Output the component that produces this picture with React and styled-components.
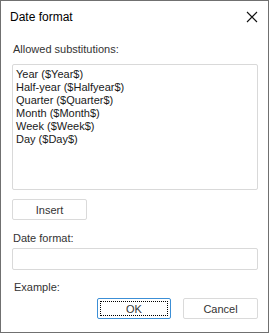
import React from 'react'
import styled, { createGlobalStyle } from 'styled-components'

const GlobalStyle = createGlobalStyle`
  html, body {
    margin: 0;
    padding: 0;
    background: #ffffff;
  }
  * {
    box-sizing: border-box;
  }
`

const Dialog = styled.div`
  width: 269px;
  height: 333px;
  border: 1px solid #707070;
  background: #ffffff;
  font-family: 'Liberation Sans', Arial, sans-serif;
  font-size: 11px;
  color: #1e1e1e;
  display: flex;
  flex-direction: column;
`

const TitleBar = styled.div`
  height: 31px;
  display: flex;
  align-items: center;
  padding: 0 9px;
`

const Title = styled.div`
  flex: 1;
  font-size: 12px;
  color: #000000;
`

const CloseButton = styled.button`
  border: 0;
  background: none;
  padding: 0;
  width: 12px;
  height: 12px;
  margin-right: 1px;
  display: flex;
  svg {
    display: block;
  }
`

const Body = styled.div`
  display: flex;
  flex-direction: column;
  padding: 11px 10px 0 11px;
`

const Label = styled.div`
  line-height: 13px;
  color: #333333;
  padding-left: ${p => p.$indent || 0}px;
  margin-bottom: ${p => p.$gap || 0}px;
`

const ListBox = styled.div`
  height: 126px;
  border: 1px solid #d9d9d9;
  border-radius: 2px;
  padding: 3px 3px;
`

const ListItem = styled.div`
  line-height: 13px;
  color: #1a1a1a;
`

const Button = styled.button`
  width: ${p => p.$width}px;
  height: 21px;
  border: 1px solid ${p => (p.$focused ? '#3c8fd6' : '#dadada')};
  border-radius: 2px;
  background: #ffffff;
  font-family: inherit;
  font-size: 11px;
  color: #333333;
  padding: 0;
  position: relative;
  &::after {
    content: '';
    display: ${p => (p.$focused ? 'block' : 'none')};
    position: absolute;
    inset: 2px;
    border: 1px dotted #000000;
  }
`

const InsertRow = styled.div`
  margin: 9px 0 12px;
`

const Field = styled.div`
  height: 22px;
  border: 1px solid #d9d9d9;
  border-radius: 2px;
  margin: 3px 0 11px;
`

const Footer = styled.div`
  display: flex;
  justify-content: flex-end;
  gap: 12px;
  margin-top: 4px;
`

const items = [
  'Year ($Year$)',
  'Half-year ($Halfyear$)',
  'Quarter ($Quarter$)',
  'Month ($Month$)',
  'Week ($Week$)',
  'Day ($Day$)',
]

const App = () => (
  <>
    <GlobalStyle />
    <Dialog>
      <TitleBar>
        <Title>Date format</Title>
        <CloseButton aria-label="Close">
          <svg width="12" height="12" viewBox="0 0 12 12">
            <path d="M1 1L11 11M11 1L1 11" stroke="#111" strokeWidth="1.1" fill="none" />
          </svg>
        </CloseButton>
      </TitleBar>
      <Body>
        <Label $indent={1} $gap={8}>Allowed substitutions:</Label>
        <ListBox>
          {items.map(item => (
            <ListItem key={item}>{item}</ListItem>
          ))}
        </ListBox>
        <InsertRow>
          <Button $width={75}>Insert</Button>
        </InsertRow>
        <Label $indent={1}>Date format:</Label>
        <Field />
        <Label $indent={2}>Example:</Label>
        <Footer>
          <Button $width={74} $focused>OK</Button>
          <Button $width={75}>Cancel</Button>
        </Footer>
      </Body>
    </Dialog>
  </>
)

export default App
